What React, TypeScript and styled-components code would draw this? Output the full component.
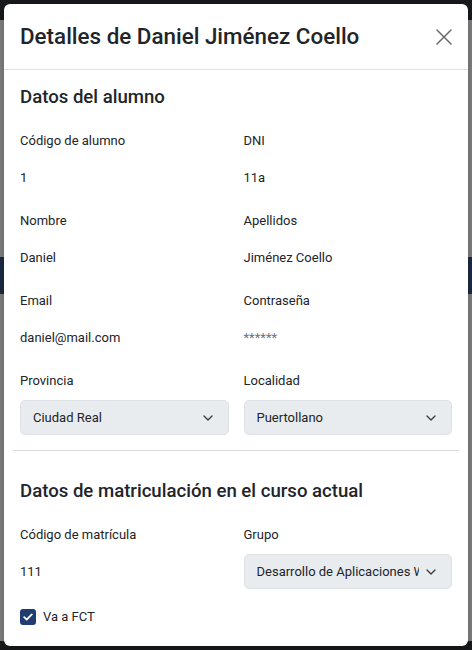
import React from "react";
import styled, { createGlobalStyle } from "styled-components";

const Global = createGlobalStyle`
  html, body { margin: 0; padding: 0; }
  body {
    font-family: Roboto, "Liberation Sans", Arial, sans-serif;
    color: #212529;
    background: #808080;
  }
  * { box-sizing: border-box; }
`;

const Backdrop = styled.div`
  position: fixed;
  inset: 0;
  display: flex;
  flex-direction: column;
  background: #808080;
`;

const BackTop = styled.div`
  height: 20px;
  background: #17191d;
`;

const BackContent = styled.div`
  flex: 1;
  display: flex;
  flex-direction: column;
`;

const BackBand = styled.div`
  margin-top: 237px;
  height: 37px;
  background: #1c2a45;
`;

const BackFooter = styled.div`
  height: 9px;
  background: #17191d;
`;

const Modal = styled.div`
  position: fixed;
  top: 4px;
  left: 4px;
  right: 4px;
  bottom: 4px;
  background: #fff;
  border-radius: 6px;
  display: flex;
  flex-direction: column;
  overflow: hidden;
  box-shadow: 0 2px 8px rgba(0, 0, 0, 0.25);
`;

const Header = styled.div`
  height: 66px;
  flex-shrink: 0;
  display: flex;
  align-items: center;
  justify-content: space-between;
  padding: 0 16px;
  border-bottom: 1px solid #dee2e6;
`;

const Title = styled.h1`
  margin: 0;
  font-size: 22.4px;
  font-weight: 500;
  line-height: 1.2;
  color: #212529;
`;

const CloseButton = styled.button`
  border: 0;
  background: transparent;
  padding: 0;
  width: 16px;
  height: 16px;
  display: flex;
  cursor: pointer;
`;

const Body = styled.div`
  padding: 16px 16px 16px;
`;

const SectionTitle = styled.h2<{ $top?: number }>`
  margin: ${(p) => p.$top ?? 0}px 0 22px;
  font-size: 18.6px;
  font-weight: 500;
  line-height: 22px;
  color: #212529;
`;

const Grid = styled.div`
  display: grid;
  grid-template-columns: 1fr 1fr;
  column-gap: 15px;
  row-gap: 15px;
`;

const Field = styled.div`
  display: flex;
  flex-direction: column;
  min-width: 0;
`;

const Label = styled.div`
  font-size: 13px;
  line-height: 21px;
  margin-bottom: 9px;
  color: #212529;
`;

const Value = styled.div<{ $muted?: boolean }>`
  height: 35px;
  display: flex;
  align-items: center;
  font-size: 13px;
  color: ${(p) => (p.$muted ? "#6c757d" : "#212529")};
`;

const SelectBox = styled.div`
  height: 35px;
  display: flex;
  align-items: center;
  gap: 7px;
  padding: 0 15px 0 12px;
  background: #e9ecef;
  border: 1px solid #dee2e6;
  border-radius: 5px;
  font-size: 13px;
  color: #212529;
`;

const SelectText = styled.span`
  flex: 1;
  min-width: 0;
  white-space: nowrap;
  overflow: hidden;
`;

const Chevron = styled.svg`
  flex-shrink: 0;
`;

const Divider = styled.hr`
  margin: 15px -7px 0;
  border: 0;
  border-top: 1px solid #dcdcdc;
`;

const CheckRow = styled.label`
  margin-top: 17px;
  height: 21px;
  display: flex;
  align-items: center;
  gap: 7px;
  font-size: 13px;
  color: #212529;
`;

const CheckBox = styled.span`
  width: 16px;
  height: 16px;
  border-radius: 3px;
  background: #1f3d70;
  display: flex;
  align-items: center;
  justify-content: center;
`;

const Select = ({ value }: { value: string }) => (
  <SelectBox>
    <SelectText>{value}</SelectText>
    <Chevron width="10" height="6" viewBox="0 0 10 6" fill="none">
      <path d="M1 1l4 4 4-4" stroke="#343a40" strokeWidth="1.3" strokeLinecap="round" strokeLinejoin="round" />
    </Chevron>
  </SelectBox>
);

export default function App() {
  return (
    <>
      <Global />
      <Backdrop>
        <BackTop />
        <BackContent>
          <BackBand />
        </BackContent>
        <BackFooter />
      </Backdrop>
      <Modal>
        <Header>
          <Title>Detalles de Daniel Jiménez Coello</Title>
          <CloseButton aria-label="Cerrar">
            <svg width="16" height="16" viewBox="0 0 16 16" fill="none">
              <path d="M1 1l14 14M15 1L1 15" stroke="#6b6b6b" strokeWidth="1.5" strokeLinecap="round" />
            </svg>
          </CloseButton>
        </Header>
        <Body>
          <SectionTitle>Datos del alumno</SectionTitle>
          <Grid>
            <Field>
              <Label>Código de alumno</Label>
              <Value>1</Value>
            </Field>
            <Field>
              <Label>DNI</Label>
              <Value>11a</Value>
            </Field>
            <Field>
              <Label>Nombre</Label>
              <Value>Daniel</Value>
            </Field>
            <Field>
              <Label>Apellidos</Label>
              <Value>Jiménez Coello</Value>
            </Field>
            <Field>
              <Label>Email</Label>
              <Value>daniel@mail.com</Value>
            </Field>
            <Field>
              <Label>Contraseña</Label>
              <Value $muted>******</Value>
            </Field>
            <Field>
              <Label>Provincia</Label>
              <Select value="Ciudad Real" />
            </Field>
            <Field>
              <Label>Localidad</Label>
              <Select value="Puertollano" />
            </Field>
          </Grid>
          <Divider />
          <SectionTitle $top={29}>Datos de matriculación en el curso actual</SectionTitle>
          <Grid>
            <Field>
              <Label>Código de matrícula</Label>
              <Value>111</Value>
            </Field>
            <Field>
              <Label>Grupo</Label>
              <Select value="Desarrollo de Aplicaciones Web" />
            </Field>
          </Grid>
          <CheckRow>
            <CheckBox>
              <svg width="10" height="8" viewBox="0 0 10 8" fill="none">
                <path d="M1.2 4.2l2.5 2.4L8.8 1.4" stroke="#fff" strokeWidth="1.8" strokeLinecap="round" strokeLinejoin="round" />
              </svg>
            </CheckBox>
            Va a FCT
          </CheckRow>
        </Body>
      </Modal>
    </>
  );
}
